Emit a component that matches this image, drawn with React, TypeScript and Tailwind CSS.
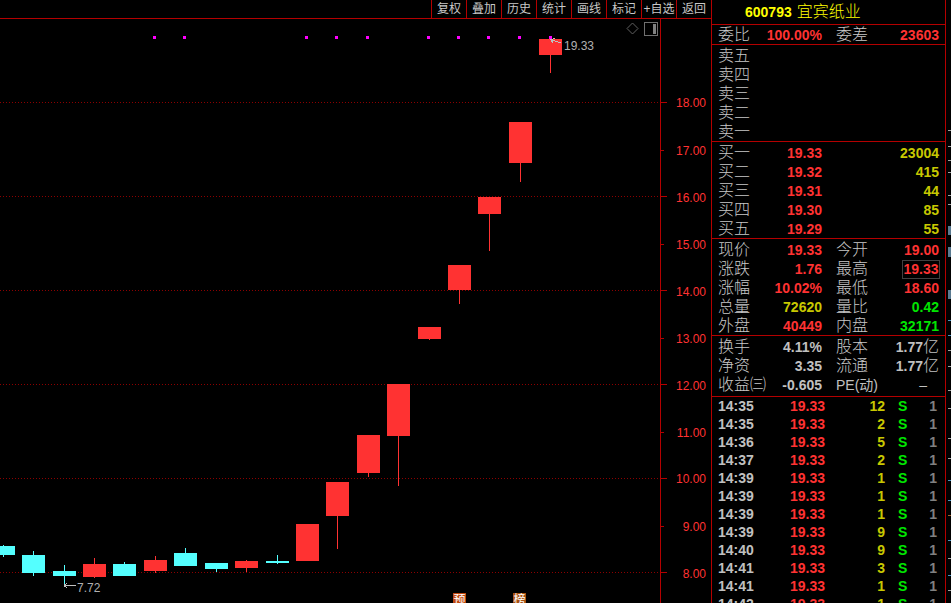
const RED = '#ff3232';
const CYAN = '#54ffff';
const LINE = '#b40000';

const toolbar = ['复权', '叠加', '历史', '统计', '画线', '标记', '+自选', '返回'];

// x = left edge, wick = [top, bottom]
const candles = [
  { x: -8, top: 546, bottom: 555, wick: [545, 557], up: false },
  { x: 22, top: 555, bottom: 573, wick: [551, 576], up: false },
  { x: 53, top: 571, bottom: 576, wick: [565, 585], up: false },
  { x: 83, top: 564, bottom: 577, wick: [558, 578], up: true },
  { x: 113, top: 564, bottom: 576, wick: [562, 576], up: false },
  { x: 144, top: 560, bottom: 571, wick: [556, 573], up: true },
  { x: 174, top: 553, bottom: 566, wick: [548, 566], up: false },
  { x: 205, top: 563, bottom: 569, wick: [563, 572], up: false },
  { x: 235, top: 561, bottom: 568, wick: [560, 572], up: true },
  { x: 266, top: 561, bottom: 563, wick: [555, 564], up: false },
  { x: 296, top: 524, bottom: 561, wick: [524, 561], up: true },
  { x: 326, top: 482, bottom: 516, wick: [482, 549], up: true },
  { x: 357, top: 435, bottom: 473, wick: [435, 477], up: true },
  { x: 387, top: 384, bottom: 436, wick: [384, 486], up: true },
  { x: 418, top: 327, bottom: 339, wick: [327, 340], up: true },
  { x: 448, top: 265, bottom: 290, wick: [265, 304], up: true },
  { x: 478, top: 197, bottom: 214, wick: [197, 251], up: true },
  { x: 509, top: 122, bottom: 163, wick: [122, 182], up: true },
  { x: 539, top: 39, bottom: 55, wick: [39, 73], up: true },
];

const dots = [153, 183, 305, 335, 366, 427, 457, 487, 518, 549];
const gridY = [102, 196, 290, 384, 478, 572];
const axis = [
  ['18.00', 102],
  ['17.00', 150],
  ['16.00', 197],
  ['15.00', 244],
  ['14.00', 291],
  ['13.00', 338],
  ['12.00', 385],
  ['11.00', 432],
  ['10.00', 478],
  ['9.00', 526],
  ['8.00', 573],
] as const;

const trades = [
  ['14:35', '12'],
  ['14:35', '2'],
  ['14:36', '5'],
  ['14:37', '2'],
  ['14:39', '1'],
  ['14:39', '1'],
  ['14:39', '1'],
  ['14:39', '9'],
  ['14:40', '9'],
  ['14:41', '3'],
  ['14:41', '1'],
  ['14:42', '1'],
];

const num = 'font-bold text-[14px] leading-none';
const label = 'text-[16px] leading-none font-light text-[#c8c8c8]';
const rowH = 'flex h-[18.8px] items-center';

function Pair({ name, value, color, children }: { name: string; value?: React.ReactNode; color?: string; children?: React.ReactNode }) {
  return (
    <div className="flex w-[103px] items-center justify-between first:w-[104px]">
      <span className={label}>{name}</span>
      {children ?? <span className={`${num} ${color}`}>{value}</span>}
    </div>
  );
}

function Quote({ name, price, vol }: { name: string; price?: string; vol?: string }) {
  return (
    <div className={`${rowH} gap-[14px] pl-[6px]`}>
      <Pair name={name} value={price} color="text-[#ff3232]" />
      {vol && (
        <div className="flex w-[103px] justify-end">
          <span className={`${num} text-[#c8c800]`}>{vol}</span>
        </div>
      )}
    </div>
  );
}

function Stat({ a, av, ac, b, bv, bc }: { a: string; av: string; ac: string; b: string; bv: React.ReactNode; bc: string }) {
  return (
    <div className={`${rowH} gap-[14px] pl-[6px]`}>
      <Pair name={a} value={av} color={ac} />
      <Pair name={b} value={bv} color={bc} />
    </div>
  );
}

function Yi() {
  return (
    <>
      1.77<span className="text-[16px] font-light">亿</span>
    </>
  );
}

function Chart() {
  return (
    <div className="relative h-[584px] w-[660px] overflow-hidden">
      <svg width="660" height="584" viewBox="0 19 660 584" shapeRendering="crispEdges">
        {gridY.map((y) => (
          <line key={y} x1="0" x2="660" y1={y + 0.5} y2={y + 0.5} stroke="#8c0000" strokeDasharray="1 2" />
        ))}
        {candles.map((c) => {
          const color = c.up ? RED : CYAN;
          return (
            <g key={c.x} fill={color}>
              <rect x={c.x + 11} y={c.wick[0]} width="1" height={c.wick[1] - c.wick[0]} />
              <rect x={c.x} y={c.top} width="23" height={c.bottom - c.top} />
            </g>
          );
        })}
        {dots.map((x) => (
          <rect key={x} x={x} y="36" width="3" height="3" fill="#ff00ff" />
        ))}
        <path d="M550.5 39.5 L561 43 M550.5 39.5 L555 38.5 M550.5 39.5 L553 43" stroke="#c0c0c0" fill="none" />
        <path d="M64 585.5 H76 M64 585.5 L67 583 M64 585.5 L67 588" stroke="#c0c0c0" fill="none" />
        <path d="M632.5 23 L638 28.5 L632.5 34 L627 28.5 Z" stroke="#606060" fill="none" shapeRendering="auto" />
        <rect x="644.5" y="22.5" width="13" height="13" stroke="#707070" fill="none" />
        <rect x="653" y="24" width="3" height="10" fill="#808080" />
      </svg>
      <span className="absolute top-[21px] left-[564px] text-[12px] leading-none text-[#b0b0b0]">19.33</span>
      <span className="absolute top-[563px] left-[77px] text-[12px] leading-none text-[#b0b0b0]">7.72</span>
      <span className="absolute top-[574px] left-[453px] h-[14px] w-[13px] bg-[#c04810] text-center text-[12px] leading-[14px] text-white">预</span>
      <span className="absolute top-[574px] left-[513px] h-[14px] w-[13px] bg-[#a85010] text-center text-[12px] leading-[14px] text-white">榜</span>
    </div>
  );
}

function Axis() {
  return (
    <div className="relative h-[584px] w-[51px] border-l border-[#b40000]">
      <svg width="8" height="584" viewBox="0 19 8 584" shapeRendering="crispEdges">
        {axis.map(([t, y]) => {
          const major = gridY.find((g) => Math.abs(g - y) < 3);
          return <rect key={t} x="0" y={major ?? y} width={major ? 6 : 3} height="1" fill={LINE} />;
        })}
      </svg>
      {axis.map(([t, y]) => (
        <span
          key={t}
          className="absolute right-[5px] text-[12px] leading-none text-[#ff3232]"
          style={{ top: y - 19 - 5 }}
        >
          {t}
        </span>
      ))}
    </div>
  );
}

function EdgeStrip() {
  const marks = [
    [130, '#a0a0a0'], [146, '#a0a0a0'], [160, '#a0a0a0'], [172, '#a0a0a0'], [195, '#a0a0a0'], [204, '#a0a0a0'],
    [320, '#4a90c0'], [335, '#4a90c0'], [350, '#a0a0a0'], [366, '#a0a0a0'], [390, '#a0a0a0'], [408, '#a0a0a0'],
    [438, '#a0a0a0'], [458, '#a0a0a0'], [480, '#4a90c0'], [500, '#4a90c0'], [515, '#a06030'], [540, '#4a90c0'],
    [558, '#a0a0a0'], [575, '#4a90c0'], [590, '#a0a0a0'],
  ] as const;
  return (
    <svg width="5" height="603" viewBox="0 0 5 603" shapeRendering="crispEdges">
      {marks.map(([y, c]) => (
        <rect key={y} x="2" y={y} width="3" height="1" fill={c} />
      ))}
      <rect x="2" y="226" width="3" height="9" fill="#5a7a90" />
      <rect x="2" y="247" width="3" height="10" fill="#5a7a90" />
      <rect x="2" y="290" width="3" height="9" fill="#5a7a90" />
    </svg>
  );
}

export default function App() {
  return (
    <div className="flex h-[603px] w-[951px] overflow-hidden bg-black font-['Liberation_Sans','Noto_Sans_CJK_SC',sans-serif]">
      <div className="flex w-[711px] shrink-0 flex-col">
        <div className="flex h-[19px] shrink-0 justify-end border-b border-[#b40000]">
          {toolbar.map((t) => (
            <div key={t} className="flex w-[35px] items-center justify-center border-l border-[#b40000] text-[12px] leading-none whitespace-nowrap text-[#c8c8c8]">
              {t}
            </div>
          ))}
        </div>
        <div className="flex">
          <Chart />
          <Axis />
        </div>
      </div>

      <div className="flex w-[235px] shrink-0 flex-col border-x border-[#b40000]">
        <div className="flex h-[25px] shrink-0 items-center gap-[5px] border-b border-[#b40000] pl-[33px] text-[#ffff00]">
          <span className={num}>600793</span>
          <span className="text-[16px] leading-none font-light">宜宾纸业</span>
        </div>
        <div className="flex h-[20px] shrink-0 items-center gap-[14px] border-b border-[#b40000] pl-[6px]">
          <Pair name="委比" value="100.00%" color="text-[#ff3232]" />
          <Pair name="委差" value="23603" color="text-[#ff3232]" />
        </div>
        <div className="h-[97px] shrink-0 border-b border-[#b40000] pt-[2px]">
          {['卖五', '卖四', '卖三', '卖二', '卖一'].map((n) => (
            <Quote key={n} name={n} />
          ))}
        </div>
        <div className="h-[97px] shrink-0 border-b border-[#b40000] pt-[2px]">
          <Quote name="买一" price="19.33" vol="23004" />
          <Quote name="买二" price="19.32" vol="415" />
          <Quote name="买三" price="19.31" vol="44" />
          <Quote name="买四" price="19.30" vol="85" />
          <Quote name="买五" price="19.29" vol="55" />
        </div>
        <div className="h-[97px] shrink-0 border-b border-[#b40000] pt-[2px]">
          <Stat a="现价" av="19.33" ac="text-[#ff3232]" b="今开" bv="19.00" bc="text-[#ff3232]" />
          <div className={`${rowH} gap-[14px] pl-[6px]`}>
            <Pair name="涨跌" value="1.76" color="text-[#ff3232]" />
            <Pair name="最高">
              <span className={`${num} -mr-px flex h-[19px] w-[38px] items-center justify-center border border-[#404040] text-[#ff3232]`}>19.33</span>
            </Pair>
          </div>
          <Stat a="涨幅" av="10.02%" ac="text-[#ff3232]" b="最低" bv="18.60" bc="text-[#ff3232]" />
          <Stat a="总量" av="72620" ac="text-[#c8c800]" b="量比" bv="0.42" bc="text-[#00e600]" />
          <Stat a="外盘" av="40449" ac="text-[#ff3232]" b="内盘" bv="32171" bc="text-[#00e600]" />
        </div>
        <div className="h-[61px] shrink-0 border-b border-[#b40000] pt-[2px]">
          <Stat a="换手" av="4.11%" ac="text-[#c0c0c0]" b="股本" bv={<Yi />} bc="text-[#c0c0c0]" />
          <Stat a="净资" av="3.35" ac="text-[#c0c0c0]" b="流通" bv={<Yi />} bc="text-[#c0c0c0]" />
          <div className={`${rowH} gap-[14px] pl-[6px]`}>
            <Pair name="收益㈢" value="-0.605" color="text-[#c0c0c0]" />
            <div className="flex w-[103px] items-center justify-between text-[14px] leading-none text-[#c0c0c0]">
              <span>PE(动)</span>
              <span className="mr-[12px]">–</span>
            </div>
          </div>
        </div>
        <div className="flex-1 overflow-hidden">
          {trades.map(([time, vol], i) => (
            <div key={i} className={`flex h-[18px] items-center pl-[6px] ${num}`}>
              <span className="w-[40px] text-[#c0c0c0]">{time}</span>
              <span className="w-[67px] text-right text-[#ff3232]">19.33</span>
              <span className="w-[60px] text-right text-[#c8c800]">{vol}</span>
              <span className="ml-[13px] w-[10px] text-[#00e600]">S</span>
              <span className="w-[29px] text-right text-[#808080]">1</span>
            </div>
          ))}
        </div>
      </div>
      <EdgeStrip />
    </div>
  );
}
